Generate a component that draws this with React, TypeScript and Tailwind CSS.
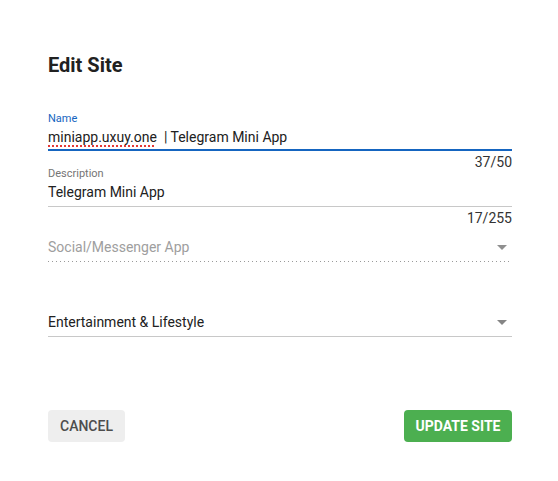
const Arrow = ({ color }: { color: string }) => (
  <svg width="10" height="5" viewBox="0 0 10 5" className="mr-[5px] shrink-0">
    <polygon points="0,0 10,0 5,5" fill={color} />
  </svg>
);

export default function App() {
  return (
    <div className="min-h-[481px] w-[558px] bg-white px-12 pt-[51px] font-['Roboto',sans-serif] text-[#212121]">
      <div className="w-[464px]">
        <h2 className="text-[20px] font-bold leading-[28px]">Edit Site</h2>

        {/* name field */}
        <div className="mt-[33px]">
          <label className="block text-[11px] leading-[13px] text-[#1565c0]">Name</label>
          <div className="mt-[2px] border-b-2 border-[#1565c0] pb-[2px] text-[14px] leading-[20px] whitespace-pre">
            <span className="underline decoration-dotted decoration-[#e53935] decoration-[1.5px] underline-offset-[3px]">
              miniapp.uxuy.one
            </span>
            {"  | Telegram Mini App"}
          </div>
          <div className="mt-[3px] text-right text-[14px] leading-[16px] text-[#333]">37/50</div>
        </div>

        {/* description field */}
        <div className="-mt-[3px]">
          <label className="block text-[11px] leading-[13px] text-[#757575]">Description</label>
          <div className="mt-[2px] border-b border-[#c8c8c8] pb-[4px] text-[14px] leading-[20px]">
            Telegram Mini App
          </div>
          <div className="mt-[3px] text-right text-[14px] leading-[16px] text-[#333]">17/255</div>
        </div>

        {/* category select, disabled */}
        <div className="mt-[11px]">
          <div className="flex items-center justify-between pb-[4px] text-[14px] leading-[20px] text-[#9e9e9e]">
            <span>Social/Messenger App</span>
            <Arrow color="#8f8f8f" />
          </div>
          <div className="h-px bg-[linear-gradient(to_right,#9a9a9a_25%,transparent_0%)] bg-[length:4px_1px]" />
        </div>

        {/* subcategory select */}
        <div className="mt-[50px]">
          <div className="flex items-center justify-between border-b border-[#c8c8c8] pb-[4px] text-[14px] leading-[20px]">
            <span>Entertainment &amp; Lifestyle</span>
            <Arrow color="#858585" />
          </div>
        </div>

        <div className="mt-[73px] flex items-center justify-between">
          <button className="h-8 rounded px-3 bg-[#eeeeee] text-[14px] font-medium text-[#4d4d4d]">
            CANCEL
          </button>
          <button className="h-8 w-[108px] rounded bg-[#4caf50] text-[14px] font-bold text-white">
            UPDATE SITE
          </button>
        </div>
      </div>
    </div>
  );
}
